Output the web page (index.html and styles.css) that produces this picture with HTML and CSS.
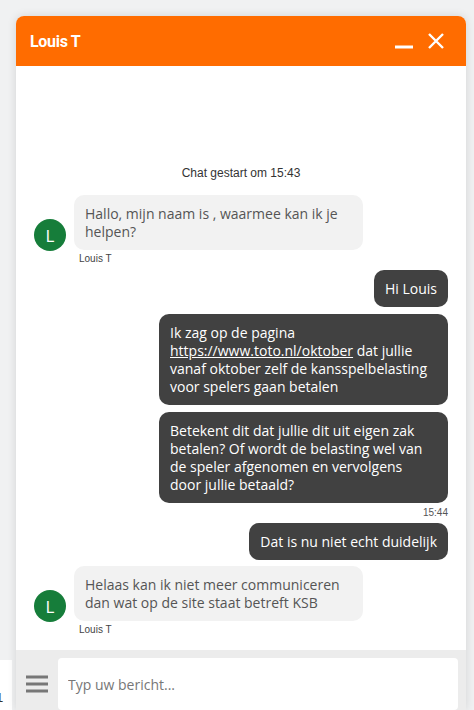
FILE: index.html
```html
<!DOCTYPE html>
<html lang="nl">
<head>
    <meta charset="UTF-8">
    <meta name="viewport" content="width=device-width, initial-scale=1.0">
    <title>Chat</title>
    <link rel="stylesheet" href="styles.css">
</head>
<body>
    <div class="behind">1</div>

    <div class="chat-widget">
        <header class="chat-header">
            <span class="chat-title">Louis T</span>
            <div class="chat-actions">
                <button class="icon-btn" aria-label="Minimaliseren">
                    <svg width="20" height="20" viewBox="0 0 20 20"><path d="M1 16h18" stroke="#fff" stroke-width="3" fill="none"/></svg>
                </button>
                <button class="icon-btn" aria-label="Sluiten">
                    <svg width="20" height="20" viewBox="0 0 20 20"><path d="M3 3l14 14M17 3L3 17" stroke="#fff" stroke-width="2.4" fill="none"/></svg>
                </button>
            </div>
        </header>

        <div class="chat-messages">
            <div class="system-line">Chat gestart om 15:43</div>

            <div class="agent-row">
                <div class="avatar">L</div>
                <div class="agent-col">
                    <div class="bubble agent">Hallo, mijn naam is , waarmee kan ik je helpen?</div>
                    <div class="sender">Louis T</div>
                </div>
            </div>

            <div class="user-group">
                <div class="bubble user">Hi Louis</div>
                <div class="bubble user">Ik zag op de pagina <a href="#">https://www.toto.nl/oktober</a> dat jullie vanaf oktober zelf de kansspelbelasting voor spelers gaan betalen</div>
                <div class="bubble user">Betekent dit dat jullie dit uit eigen zak betalen? Of wordt de belasting wel van de speler afgenomen en vervolgens door jullie betaald?</div>
                <div class="time">15:44</div>
                <div class="bubble user">Dat is nu niet echt duidelijk</div>
            </div>

            <div class="agent-row">
                <div class="avatar">L</div>
                <div class="agent-col">
                    <div class="bubble agent">Helaas kan ik niet meer communiceren dan wat op de site staat betreft KSB</div>
                    <div class="sender">Louis T</div>
                </div>
            </div>
        </div>

        <footer class="chat-footer">
            <button class="menu-btn" aria-label="Menu">
                <svg width="22" height="18" viewBox="0 0 22 18"><path d="M0 2h22M0 9h22M0 16h22" stroke="#777" stroke-width="3" fill="none"/></svg>
            </button>
            <input class="chat-input" type="text" placeholder="Typ uw bericht...">
        </footer>
    </div>
</body>
</html>
```

FILE: styles.css
```css
body {
    margin: 0;
    padding: 0;
    width: 474px;
    height: 710px;
    overflow: hidden;
    background-color: #f0f1f2;
    font-family: 'Open Sans', sans-serif;
    position: relative;
}

.behind {
    position: absolute;
    left: -4px;
    top: 660px;
    width: 16px;
    height: 50px;
    background-color: #fff;
    font-family: 'Liberation Sans', sans-serif;
    font-size: 13px;
    color: #333;
    padding-top: 30px;
    box-sizing: border-box;
}

.chat-widget {
    position: relative;
    margin: 16px 0 0 16px;
    width: 450px;
    height: 694px;
    display: flex;
    flex-direction: column;
    background-color: #fff;
    border-radius: 8px 8px 0 0;
    box-shadow: 0 0 10px rgba(0, 0, 0, 0.12);
}

.chat-header {
    height: 50px;
    flex-shrink: 0;
    display: flex;
    justify-content: space-between;
    align-items: center;
    padding: 0 20px 0 14px;
    background-color: #ff6c00;
    border-radius: 8px 8px 0 0;
}

.chat-title {
    color: #fff;
    font-family: 'Roboto', sans-serif;
    font-weight: bold;
    font-size: 16px;
    letter-spacing: -0.3px;
}

.chat-actions {
    display: flex;
    gap: 12px;
    align-items: center;
}

.icon-btn {
    background: transparent;
    border: none;
    padding: 0;
    width: 20px;
    height: 20px;
    cursor: pointer;
}

.icon-btn svg {
    display: block;
}

.chat-messages {
    flex: 1;
    display: flex;
    flex-direction: column;
    padding: 100px 18px 0 18px;
    overflow: hidden;
}

.system-line {
    text-align: center;
    font-family: 'Liberation Sans', sans-serif;
    font-size: 12px;
    color: #333;
    margin-bottom: 15px;
}

.bubble {
    max-width: 289px;
    box-sizing: border-box;
    padding: 9.5px 11px;
    border-radius: 10px;
    font-size: 14px;
    line-height: 18px;
}

.bubble.agent {
    background-color: #f2f2f2;
    color: #555;
}

.bubble.user {
    background-color: #414141;
    color: #fff;
}

.bubble.user a {
    color: #fff;
}

.agent-row {
    display: flex;
    align-items: flex-start;
    gap: 8px;
}

.avatar {
    width: 32px;
    height: 32px;
    border-radius: 50%;
    background-color: #167d3a;
    color: #fff;
    display: flex;
    justify-content: center;
    align-items: center;
    font-size: 17px;
    margin-top: 24px;
    flex-shrink: 0;
}

.agent-col {
    display: flex;
    flex-direction: column;
}

.sender {
    font-family: 'Liberation Sans', sans-serif;
    font-size: 10px;
    color: #444;
    margin: 3px 0 0 5px;
}

.user-group {
    display: flex;
    flex-direction: column;
    align-items: flex-end;
    gap: 7px;
    margin: 6px 0 6px 0;
}

.time {
    font-family: 'Liberation Sans', sans-serif;
    font-size: 10px;
    line-height: 12px;
    color: #555;
    margin: -3px 0 -3px 0;
}

.chat-footer {
    height: 60px;
    flex-shrink: 0;
    display: flex;
    align-items: center;
    gap: 10px;
    padding: 8px 8px 0 10px;
    box-sizing: border-box;
    background-color: #ececec;
}

.menu-btn {
    background: transparent;
    border: none;
    padding: 0;
    width: 22px;
    height: 18px;
    cursor: pointer;
}

.menu-btn svg {
    display: block;
}

.chat-input {
    flex: 1;
    height: 52px;
    border: none;
    border-radius: 4px;
    background-color: #fff;
    padding: 0 10px;
    font-family: 'Open Sans', sans-serif;
    font-size: 14px;
    color: #555;
    outline: none;
}

.chat-input::placeholder {
    color: #777;
}
```
